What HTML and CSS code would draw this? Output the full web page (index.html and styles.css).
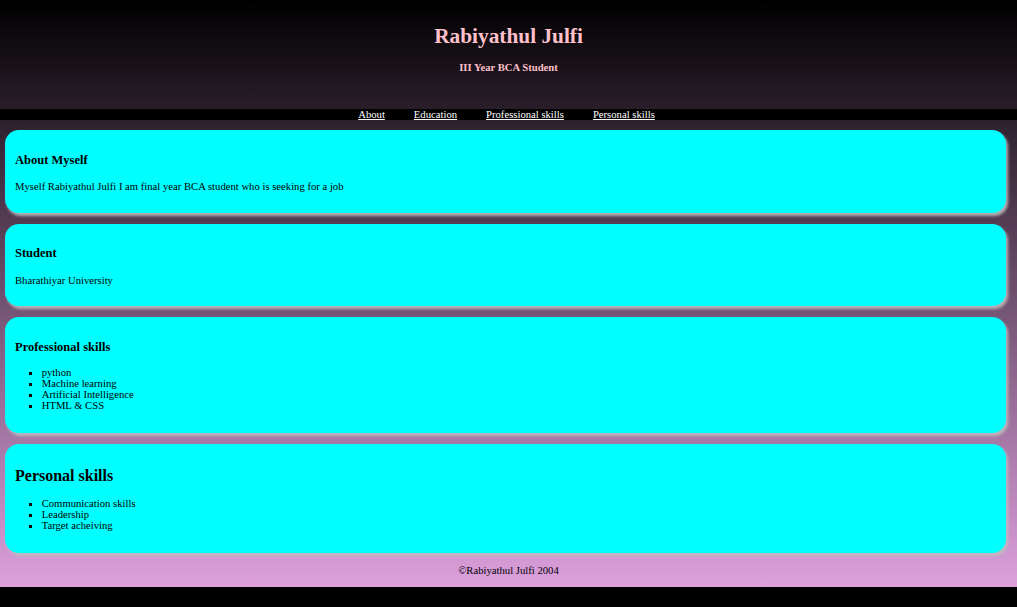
FILE: index.html
```html
<!DOCTYPE html>
<html>
<head>
<meta charset="utf-8">
<title>Rabiyathul Julfi</title>
<link rel="stylesheet" href="styles.css">
</head>
<body>
<header class="header">
  <h1 class="title">Rabiyathul Julfi</h1>
  <h4 class="subtitle">III Year BCA Student</h4>
</header>
<nav class="nav">
  <a href="#about">About</a>
  <a href="#education">Education</a>
  <a href="#professional">Professional skills</a>
  <a href="#personal">Personal skills</a>
</nav>
<section class="card" id="about">
  <h3 class="card-title">About Myself</h3>
  <p class="card-text">Myself Rabiyathul Julfi I am final year BCA student who is seeking for a job</p>
</section>
<section class="card" id="education">
  <h3 class="card-title">Student</h3>
  <p class="card-text">Bharathiyar University</p>
</section>
<section class="card" id="professional">
  <h3 class="card-title">Professional skills</h3>
  <ul class="list">
    <li>python</li>
    <li>Machine learning</li>
    <li>Artificial Intelligence</li>
    <li>HTML &amp; CSS</li>
  </ul>
</section>
<section class="card" id="personal">
  <h2 class="card-title-lg">Personal skills</h2>
  <ul class="list">
    <li>Communication skills</li>
    <li>Leadership</li>
    <li>Target acheiving</li>
  </ul>
</section>
<footer class="footer">©Rabiyathul Julfi 2004</footer>
</body>
</html>
```
FILE: styles.css
```css
html {
  background: #000;
}
body {
  margin: 0;
  font-family: "Liberation Serif", "Times New Roman", serif;
  font-size: 10.67px;
  color: #000;
  background: linear-gradient(#000, #dda0dd);
}
.header {
  padding: 10px 0 24px;
  text-align: center;
}
.title {
  font-size: 21.33px;
  margin: 14px 0 12px;
  color: #ffc0cb;
}
.subtitle {
  font-size: 10.67px;
  margin: 12px 0;
  color: #ffc0cb;
}
.nav {
  background: #000;
  display: flex;
  justify-content: center;
  gap: 29px;
  height: 11px;
  line-height: 11px;
  margin-left: -4px;
}
.nav a {
  color: #fff;
  text-decoration: underline;
}
.card {
  display: flow-root;
  background: #00ffff;
  margin: 10px 11px 11px 5px;
  padding: 10px;
  border-radius: 14px;
  box-shadow: 2px 3px 3px rgba(190, 190, 190, 0.9);
}
.card-title {
  font-size: 12.5px;
  margin: 12.5px 0;
}
.card-title-lg {
  font-size: 16px;
  margin: 13.3px 0;
}
.card-text {
  margin: 10.67px 0;
}
.list {
  list-style: square;
  margin: 10.67px 0 11.5px;
  padding-left: 26.7px;
  line-height: 11px;
}
.footer {
  text-align: center;
  padding: 0 0 11px;
}
```
